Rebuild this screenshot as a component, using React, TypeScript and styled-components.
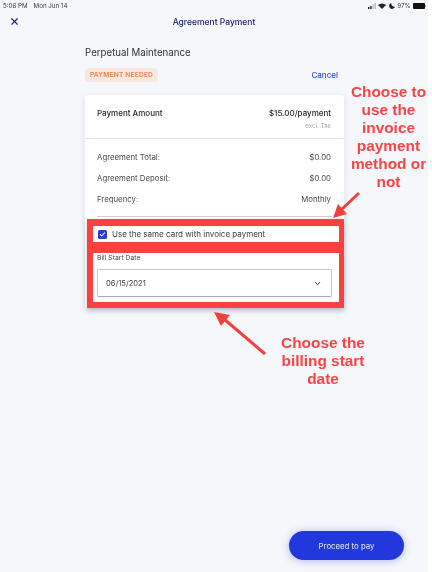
import styled, { createGlobalStyle } from "styled-components"
import { X, ChevronDown, Check } from "lucide-react"

const GlobalStyle = createGlobalStyle`
  html, body {
    margin: 0;
    padding: 0;
    background: #fff;
  }
  * {
    box-sizing: border-box;
  }
`

const Screen = styled.div`
  position: relative;
  width: 432px;
  height: 572px;
  overflow: hidden;
  background: #fff;
  filter: blur(0.35px);
  font-family: Inter, "Liberation Sans", sans-serif;
  color: #2b2d33;
`

const Page = styled.div`
  width: 428px;
  height: 572px;
  display: flex;
  flex-direction: column;
  background: #f6f7fb;
`

const StatusBar = styled.div`
  height: 11px;
  padding: 0 2px 0 3px;
  display: flex;
  align-items: center;
  justify-content: space-between;
  font-size: 6.2px;
  color: #33353a;
`

const StatusLeft = styled.div`
  display: flex;
  gap: 6px;
`

const StatusRight = styled.div`
  display: flex;
  align-items: center;
  gap: 2.5px;
`

const NavBar = styled.div`
  height: 21px;
  padding-left: 0;
  position: relative;
  display: flex;
  align-items: center;
  justify-content: center;
  color: #1d2470;
`

const CloseButton = styled.div`
  position: absolute;
  left: 9px;
  top: 5px;
  display: flex;
`

const NavTitle = styled.div`
  font-size: 8.5px;
  font-weight: 500;
`

const Content = styled.div`
  width: 259px;
  margin: 0 0 0 85px;
  display: flex;
  flex-direction: column;
`

const PlanName = styled.div`
  margin-top: 13px;
  font-size: 9.7px;
  line-height: 15px;
  color: #303136;
`

const StatusRow = styled.div`
  margin-top: 8px;
  display: flex;
  align-items: center;
  justify-content: space-between;
  padding-right: 6px;
`

const Badge = styled.div`
  width: 73px;
  height: 14px;
  border-radius: 4px;
  background: #f9e6df;
  color: #e8834f;
  font-size: 6.6px;
  font-weight: 600;
  letter-spacing: 0.2px;
  display: flex;
  align-items: center;
  justify-content: center;
`

const CancelLink = styled.div`
  font-size: 8px;
  font-weight: 500;
  color: #3048f0;
`

const Card = styled.div`
  margin-top: 13px;
  background: #fff;
  border-radius: 4px 4px 0 0;
  box-shadow: 0 2px 6px rgba(40, 50, 90, 0.14);
  display: flex;
  flex-direction: column;
`

const AmountSection = styled.div`
  height: 44px;
  padding: 12px 13px 0 12px;
  border-bottom: 1px solid #dfe4f4;
`

const Row = styled.div`
  display: flex;
  justify-content: space-between;
  align-items: center;
`

const AmountText = styled.div`
  font-size: 8px;
  line-height: 12px;
  font-weight: 500;
  color: #26272c;
`

const TaxNote = styled.div`
  margin-top: 2px;
  text-align: right;
  font-size: 6.2px;
  line-height: 9px;
  color: #a7a9b0;
`

const DetailSection = styled.div`
  padding: 12px 13px 0 12px;
  display: flex;
  flex-direction: column;
  gap: 9px;
`

const DetailText = styled.div`
  font-size: 7.8px;
  line-height: 12px;
  color: #4a4c52;
`

const Rule = styled.div`
  margin: 11px 12px 0;
  height: 1px;
  background: #d0d1d6;
`

const RedFrame = styled.div`
  margin: 2px 0 0 2px;
  padding: 7px 5px 6px 6px;
  background: #fb4040;
  display: flex;
  flex-direction: column;
  gap: 11px;
  box-shadow: 0 2px 5px rgba(40, 50, 90, 0.25);
`

const CheckRow = styled.div`
  height: 16px;
  background: #fff;
  padding-left: 5px;
  display: flex;
  align-items: center;
  gap: 5px;
  font-size: 8px;
  color: #3a3b40;
`

const CheckBox = styled.div`
  width: 9px;
  height: 9px;
  border-radius: 1.5px;
  background: #2b3bd6;
  color: #fff;
  display: flex;
  align-items: center;
  justify-content: center;
`

const DateSection = styled.div`
  height: 49px;
  background: #fff;
  padding: 1px 7px 0 4px;
`

const DateLabel = styled.div`
  font-size: 6.8px;
  line-height: 8px;
  color: #4a4c52;
`

const DateSelect = styled.div`
  margin-top: 7px;
  height: 28px;
  border: 1px solid #c4c5ca;
  border-bottom-color: #a9aab0;
  border-radius: 2px;
  padding: 0 9px 0 8px;
  display: flex;
  align-items: center;
  justify-content: space-between;
  font-size: 7.6px;
  color: #3f4046;
`

const Footer = styled.div`
  margin-top: auto;
  padding: 0 24px 12px 0;
  display: flex;
  justify-content: flex-end;
`

const PayButton = styled.div`
  width: 115px;
  height: 29px;
  border-radius: 15px;
  background: #2338dc;
  color: #e9ebfb;
  font-size: 7.8px;
  box-shadow: 0 1px 8px rgba(35, 56, 220, 0.35);
  display: flex;
  align-items: center;
  justify-content: center;
`

const Note = styled.div<{ $left: number; $top: number; $width: number }>`
  position: absolute;
  left: ${({ $left }) => $left}px;
  top: ${({ $top }) => $top}px;
  width: ${({ $width }) => $width}px;
  text-align: center;
  font-family: "Liberation Sans", Arial, sans-serif;
  font-size: 15.4px;
  line-height: 18px;
  font-weight: 700;
  color: #f94444;
`

const ArrowLayer = styled.svg`
  position: absolute;
  left: 0;
  top: 0;
  pointer-events: none;
`

export default function App() {
  return (
    <Screen>
      <GlobalStyle />
      <Page>
        <StatusBar>
          <StatusLeft>
            <span>5:06 PM</span>
            <span>Mon Jun 14</span>
          </StatusLeft>
          <StatusRight>
            <svg width="8" height="6" viewBox="0 0 8 6">
              <rect x="0" y="4" width="1.4" height="2" fill="#222" />
              <rect x="2.2" y="3" width="1.4" height="3" fill="#222" />
              <rect x="4.4" y="1.5" width="1.4" height="4.5" fill="#bbb" />
              <rect x="6.6" y="0" width="1.4" height="6" fill="#bbb" />
            </svg>
            <svg width="8" height="6" viewBox="0 0 8 6">
              <path d="M0 2 Q4 -1.2 8 2 L4 6 Z" fill="#222" />
            </svg>
            <svg width="6" height="6" viewBox="0 0 6 6">
              <path d="M2.4 0 A3 3 0 1 0 6 3.8 A3.2 3.2 0 0 1 2.4 0 Z" fill="#222" />
            </svg>
            <span>97%</span>
            <svg width="13" height="6" viewBox="0 0 13 6">
              <rect x="0" y="0" width="12" height="6" rx="1" fill="#111" />
              <rect x="12.2" y="2" width="0.8" height="2" fill="#777" />
            </svg>
          </StatusRight>
        </StatusBar>
        <NavBar>
          <CloseButton>
            <X size={11} strokeWidth={2.4} />
          </CloseButton>
          <NavTitle>Agreement Payment</NavTitle>
        </NavBar>
        <Content>
          <PlanName>Perpetual Maintenance</PlanName>
          <StatusRow>
            <Badge>PAYMENT NEEDED</Badge>
            <CancelLink>Cancel</CancelLink>
          </StatusRow>
          <Card>
            <AmountSection>
              <Row>
                <AmountText>Payment Amount</AmountText>
                <AmountText>$15.00/payment</AmountText>
              </Row>
              <TaxNote>excl. Tax</TaxNote>
            </AmountSection>
            <DetailSection>
              <Row>
                <DetailText>Agreement Total:</DetailText>
                <DetailText>$0.00</DetailText>
              </Row>
              <Row>
                <DetailText>Agreement Deposit:</DetailText>
                <DetailText>$0.00</DetailText>
              </Row>
              <Row>
                <DetailText>Frequency:</DetailText>
                <DetailText>Monthly</DetailText>
              </Row>
            </DetailSection>
            <Rule />
            <RedFrame>
              <CheckRow>
                <CheckBox>
                  <Check size={7} strokeWidth={3.5} />
                </CheckBox>
                Use the same card with invoice payment
              </CheckRow>
              <DateSection>
                <DateLabel>Bill Start Date</DateLabel>
                <DateSelect>
                  06/15/2021
                  <ChevronDown size={9} strokeWidth={2.6} color="#26272c" />
                </DateSelect>
              </DateSection>
            </RedFrame>
          </Card>
        </Content>
        <Footer>
          <PayButton>Proceed to pay</PayButton>
        </Footer>
      </Page>
      <Note $left={345} $top={83} $width={87}>
        Choose to use the invoice payment method or not
      </Note>
      <Note $left={272} $top={334} $width={102}>
        Choose the billing start date
      </Note>
      <ArrowLayer width="432" height="572" viewBox="0 0 432 572">
        <line x1="359" y1="193" x2="341" y2="210" stroke="#f0413f" strokeWidth="3" />
        <polygon points="333,218 338,204 347,214" fill="#f0413f" />
        <line x1="265" y1="354" x2="224" y2="319" stroke="#f0413f" strokeWidth="3" />
        <polygon points="214,312 230,315 221,326" fill="#f0413f" />
      </ArrowLayer>
    </Screen>
  )
}
